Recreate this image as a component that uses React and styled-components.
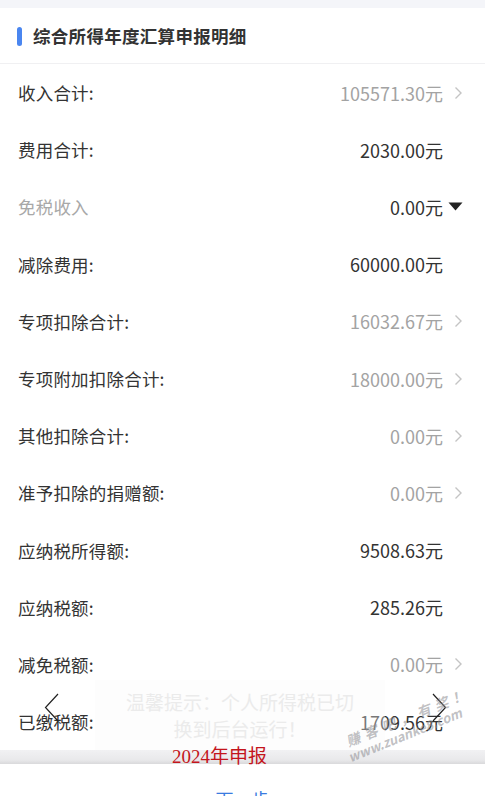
import React from 'react';
import styled, { createGlobalStyle } from 'styled-components';

const GlobalStyle = createGlobalStyle`
  html, body {
    margin: 0;
    padding: 0;
    background: #fff;
    overflow: hidden;
  }
  body {
    font-family: "Noto Sans CJK SC", "Noto Sans", sans-serif;
    color: #333;
  }
`;

const Page = styled.div`
  position: relative;
  width: 485px;
  height: 796px;
  overflow: hidden;
  background: #f4f5f9;
  padding-top: 8px;
  box-sizing: border-box;
`;

const Card = styled.div`
  background: #fff;
`;

const Header = styled.div`
  display: flex;
  align-items: center;
  height: 56px;
  padding-left: 17px;
  border-bottom: 1px solid #f0f0f2;
  box-sizing: border-box;
`;

const Mark = styled.span`
  width: 5px;
  height: 19px;
  border-radius: 3px;
  background: #4a86f0;
  margin-right: 11px;
  margin-top: 1px;
`;

const Title = styled.h2`
  margin: 0;
  font-size: 17.5px;
  font-weight: 700;
  color: #333;
  letter-spacing: 0.3px;
`;

const Row = styled.div`
  display: flex;
  align-items: center;
  height: 57.2px;
  padding: 0 22px 0 18px;
`;

const Label = styled.span`
  flex: 1;
  font-size: 17.5px;
  color: ${p => (p.muted ? '#a8a8a8' : '#333')};
  letter-spacing: 0.2px;
`;

const Value = styled.span`
  font-size: 18px;
  color: ${p => (p.muted ? '#a3a3a3' : '#333')};
`;

const Slot = styled.span`
  display: flex;
  align-items: center;
  justify-content: flex-end;
  width: 20px;
`;

const Footer = styled.div`
  background: #fff;
  height: 46px;
  position: relative;
`;

const Band = styled.div`
  height: 14px;
  background: linear-gradient(#f1f1f3, #e9e9eb 70%, #d9d9db);
`;

const NextText = styled.div`
  text-align: center;
  font-size: 18px;
  line-height: 18px;
  color: #3a7be0;
  margin-top: 26px;
`;

const Toast = styled.div`
  position: absolute;
  left: 95px;
  top: 680px;
  width: 290px;
  height: 70px;
  display: flex;
  flex-direction: column;
  align-items: center;
  justify-content: center;
  background: rgba(248, 248, 250, 0.35);
  color: #ebebeb;
  font-size: 19px;
  line-height: 27px;
  text-align: center;
`;

const Nav = styled.div`
  position: absolute;
  top: 692px;
  left: ${p => p.left}px;
  width: 16px;
  height: 32px;
`;

const Caption = styled.div`
  position: absolute;
  left: 172px;
  top: 745px;
  font-family: "Liberation Serif", "Noto Sans CJK SC", serif;
  font-size: 19px;
  line-height: 24px;
  color: #c4151c;
`;

const Watermark = styled.div`
  position: absolute;
  left: 336px;
  top: 737px;
  transform: rotate(-22deg);
  transform-origin: left top;
  color: rgba(140, 140, 145, 0.55);
  font-weight: 700;
  font-style: italic;
  line-height: 16px;
  pointer-events: none;
`;

const WmLine = styled.div`
  font-size: ${p => p.size}px;
  padding-left: ${p => p.indent || 0}px;
  letter-spacing: ${p => p.spacing || 0}px;
  white-space: nowrap;
`;

const Chevron = () => (
  <svg width="9" height="14" viewBox="0 0 9 14">
    <path d="M1.5 1.5 L7 7 L1.5 12.5" fill="none" stroke="#c4c4c4" strokeWidth="1.4" />
  </svg>
);

const Caret = () => (
  <svg width="15" height="9" viewBox="0 0 15 9">
    <path d="M0.5 0.5 H14.5 L7.5 8.5 Z" fill="#222" />
  </svg>
);

const rows = [
  { label: '收入合计:', value: '105571.30元', link: true },
  { label: '费用合计:', value: '2030.00元' },
  { label: '免税收入', value: '0.00元', caret: true, mutedLabel: true },
  { label: '减除费用:', value: '60000.00元' },
  { label: '专项扣除合计:', value: '16032.67元', link: true },
  { label: '专项附加扣除合计:', value: '18000.00元', link: true },
  { label: '其他扣除合计:', value: '0.00元', link: true },
  { label: '准予扣除的捐赠额:', value: '0.00元', link: true },
  { label: '应纳税所得额:', value: '9508.63元' },
  { label: '应纳税额:', value: '285.26元' },
  { label: '减免税额:', value: '0.00元', link: true },
  { label: '已缴税额:', value: '1709.56元' },
];

export default function App() {
  return (
    <Page>
      <GlobalStyle />
      <Card>
        <Header>
          <Mark />
          <Title>综合所得年度汇算申报明细</Title>
        </Header>
        {rows.map(r => (
          <Row key={r.label}>
            <Label muted={r.mutedLabel}>{r.label}</Label>
            <Value muted={r.link}>{r.value}</Value>
            <Slot>{r.link ? <Chevron /> : r.caret ? <Caret /> : null}</Slot>
          </Row>
        ))}
      </Card>
      <Footer>
        <Band />
        <NextText>下一步</NextText>
      </Footer>

      <Toast>
        <div>温馨提示：个人所得税已切</div>
        <div>换到后台运行！</div>
      </Toast>
      <Nav left={44}>
        <svg width="16" height="32" viewBox="0 0 16 32">
          <path d="M14 2 L1.5 15.5 L14 29" fill="none" stroke="#222" strokeWidth="1.2" />
        </svg>
      </Nav>
      <Nav left={431}>
        <svg width="16" height="32" viewBox="0 0 16 32">
          <path d="M2 2 L14.5 15.5 L2 29" fill="none" stroke="#222" strokeWidth="1.2" />
        </svg>
      </Nav>
      <Caption>2024年申报</Caption>
      <Watermark>
        <WmLine size={14} indent={8} spacing={5}>赚客吧，有奖！</WmLine>
        <WmLine size={13} indent={4}>www.zuanke8.com</WmLine>
      </Watermark>
    </Page>
  );
}
